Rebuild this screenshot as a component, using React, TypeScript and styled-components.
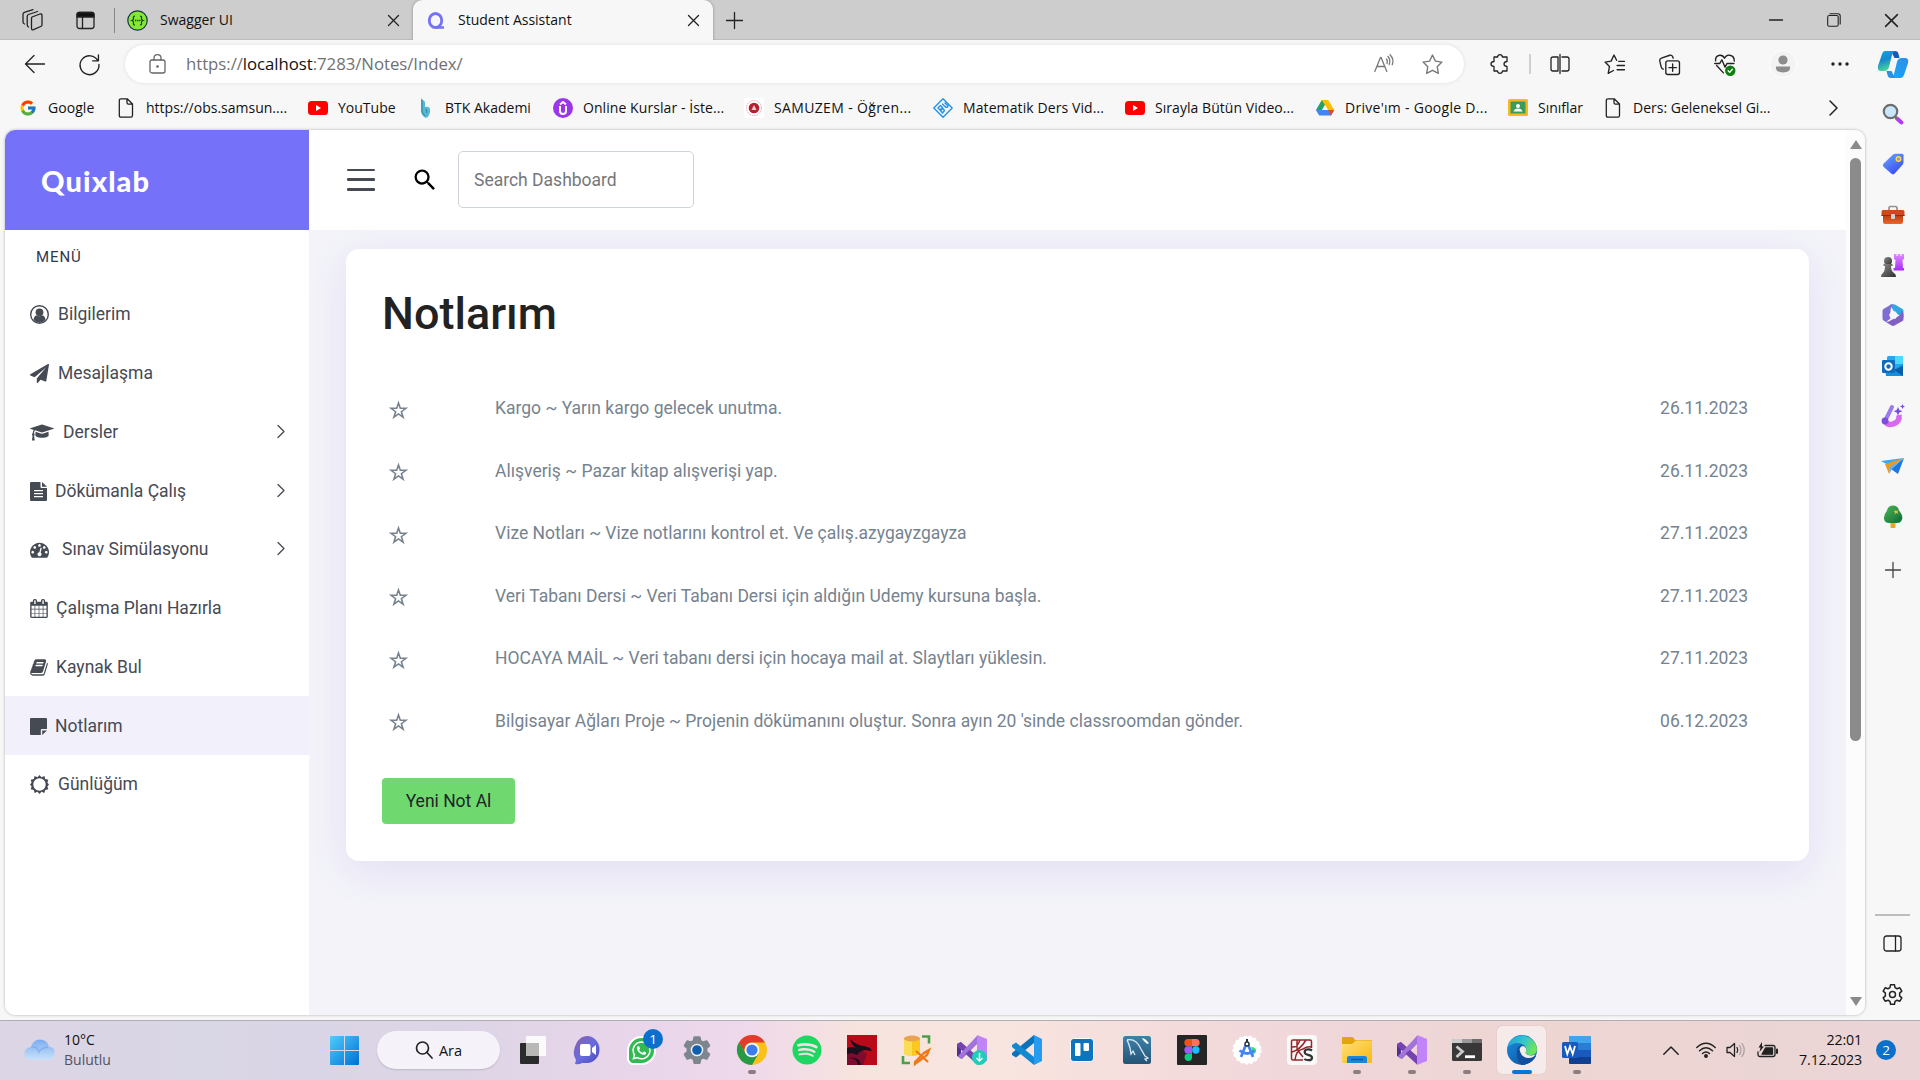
import React from 'react';
import styled, { createGlobalStyle, css } from 'styled-components';
import { FcGoogle } from 'react-icons/fc';
import { FaSpotify, FaWhatsapp } from 'react-icons/fa';
import { MdSearch } from 'react-icons/md';

const GlobalStyle = createGlobalStyle`
  *, *::before, *::after { box-sizing: border-box; }
  body { margin: 0; overflow: hidden; font-family: "Open Sans", "Noto Sans", sans-serif; }
  svg { display: block; flex: none; overflow: visible; }
`;

const roboto = css`font-family: Roboto, "Liberation Sans", sans-serif;`;

const Desktop = styled.div`
  width: 1920px; height: 1080px; display: flex; flex-direction: column;
  background: #f7f7f7; color: #111; overflow: hidden; white-space: nowrap;
`;

/* ---------- Browser chrome ---------- */
const TabStrip = styled.header`
  height: 40px; display: flex; align-items: center; flex: none;
  background: #cdcdcd; box-shadow: inset 0 -1px 0 #bdbdbd;
`;
const Slot = styled.div<{ $w: number; $pl?: number }>`
  width: ${p => p.$w}px; padding-left: ${p => p.$pl ?? 0}px; display: flex; justify-content: center; align-items: center; flex: none;
`;
const VLine = styled.span<{ $h: number; $c: string; $w?: number }>`
  width: ${p => p.$w ?? 1}px; height: ${p => p.$h}px; background: ${p => p.$c}; flex: none;
`;
const Tab = styled.div<{ $active?: boolean; $w: number }>`
  width: ${p => p.$w}px; height: 40px; padding: 0 14px 0 ${p => (p.$active ? 12 : 2)}px;
  display: flex; align-items: center; flex: none;
  border-radius: 9px 9px 0 0; font-size: 14px;
  background: ${p => (p.$active ? '#f7f7f7' : 'transparent')};
  box-shadow: ${p => (p.$active ? '0 0 3px rgba(0,0,0,.35)' : 'none')};
  clip-path: inset(0 -4px 0 -4px);
`;
const TabTitle = styled.span`flex: 1; margin-left: 12px; line-height: 20px;`;
const Spacer = styled.span`flex: 1;`;

const Toolbar = styled.div`
  height: 46px; padding: 2px 0 0 7px; display: flex; align-items: center; flex: none;
`;
const Address = styled.div`
  width: 1339px; height: 38px; margin: 0 9px 0 8px; padding: 0 7px 0 24px; display: flex; align-items: center;
  background: #fff; border-radius: 19px; box-shadow: 0 0 4px rgba(0,0,0,.1); flex: none;
`;
const Url = styled.span`
  flex: 1; margin-left: 20px; font-size: 16.8px; letter-spacing: -0.05px; color: #717171; line-height: 24px; margin-top: -1px;
  b { font-weight: 400; color: #111; }
`;
const Avatar = styled.span`
  width: 28px; height: 28px; border-radius: 50%; background: #f3f3f3; border: 1px solid #fff;
  display: flex; align-items: center; justify-content: center;
`;

const Body = styled.div`height: 934px; display: flex; flex: none;`;
const MainColumn = styled.div`width: 1865px; display: flex; flex-direction: column; flex: none;`;
const Bookmarks = styled.nav`height: 44px; padding-left: 18px; display: flex; align-items: center; flex: none;`;
const Bookmark = styled.div<{ $w: number }>`
  width: ${p => p.$w}px; display: flex; align-items: center; gap: 10px; flex: none;
  font-size: 14px; line-height: 20px;
`;
const BookmarkText = styled.span<{ $ls: number }>`letter-spacing: ${p => p.$ls}px;`;

const EdgeBar = styled.aside`
  width: 55px; display: flex; flex-direction: column; align-items: center; padding: 3px 0 0; flex: none;
`;
const EdgeItem = styled.div<{ $h?: number }>`
  height: ${p => p.$h ?? 50.3}px; display: flex; align-items: center; justify-content: center; flex: none;
`;
const EdgeRule = styled.span`width: 35px; height: 2px; background: #bdbdbd; margin-bottom: 2px; flex: none;`;

/* ---------- Web page ---------- */
const Page = styled.div`
  width: 1860px; height: 885px; margin-left: 5px; display: flex; flex: none; overflow: hidden;
  border-radius: 10px; background: #f3f3f9; box-shadow: 0 0 3px rgba(0,0,0,.3);
  ${roboto}
`;
const SideNav = styled.aside`width: 304px; background: #fff; display: flex; flex-direction: column; flex: none;`;
const Brand = styled.div`
  height: 100px; padding: 0 0 0 36px; display: flex; align-items: center; background: #7571f9; color: #fff; flex: none;
  font: 900 29px/1 Lato, sans-serif; letter-spacing: 1.1px;
`;
const MenuLabel = styled.div`
  height: 54.5px; padding-left: 31px; font-size: 15px; letter-spacing: 0.9px; line-height: 54px; color: #30384a; flex: none;
`;
const MenuItem = styled.div<{ $active?: boolean }>`
  height: 58.75px; padding: 0 24px 0 25px; display: flex; align-items: center; flex: none;
  font-size: 17.5px; color: #464a53; background: ${p => (p.$active ? '#f2f0fb' : 'transparent')};
`;
const MenuIcon = styled.span<{ $gap: number }>`margin: 2px ${p => p.$gap}px 0 0; display: flex;`;
const MenuText = styled.span`flex: 1; line-height: 26px; margin-top: 1px;`;

const Content = styled.main`width: 1537px; display: flex; flex-direction: column; flex: none; overflow: hidden;`;
const TopBar = styled.div`
  height: 100px; padding: 0 0 1px 38px; display: flex; align-items: center; background: #fff; flex: none;
`;
const Burger = styled.div`
  width: 28px; height: 22px; display: flex; flex-direction: column; justify-content: space-between;
  span { height: 2.5px; background: #464a53; border-radius: 1px; }
`;
const SearchBox = styled.div`
  width: 236px; height: 57px; padding-left: 15px; border: 1px solid #ced4da; border-radius: 5px;
  font-size: 17.5px; line-height: 56px; color: #76777b;
`;
const Card = styled.section`
  width: 1463px; height: 612px; margin: 19px 0 0 37px; padding: 33px 36px 0; border-radius: 13px; background: #fff; flex: none;
  box-shadow: 0 10px 40px -2px rgba(120, 90, 220, .14);
  display: flex; flex-direction: column; align-items: flex-start;
`;
const Title = styled.h1`margin: 0 0 31px 0; font-size: 45px; line-height: 64px; font-weight: 500; color: #222;`;
const Notes = styled.div`width: 100%; display: flex; flex-direction: column; flex: none;`;
const Note = styled.div`
  height: 62.5px; padding: 0 25px 0 7px; display: flex; align-items: center; font-size: 17.5px; color: #76838f;
`;
const NoteStar = styled.span`width: 106px; padding-top: 4px;`;
const NoteText = styled.span`flex: 1;`;
const AddButton = styled.button`
  width: 133px; height: 46px; margin-top: 26px; border: 0; border-radius: 4px; background: #6fd96f; color: #212529;
  font-size: 17.5px; ${roboto}
`;
const ScrollTrack = styled.div`
  width: 19px; padding: 10px 0 9px; display: flex; flex-direction: column; align-items: center; background: #fcfcfc; flex: none;
`;
const ScrollThumb = styled.div`width: 11px; height: 583px; margin: 9px 0 auto; border-radius: 6px; background: #8b8b8b;`;

/* ---------- Taskbar ---------- */
const Taskbar = styled.footer`
  height: 60px; padding-bottom: 1px; display: flex; align-items: center; border-top: 1px solid #b1acb5; flex: none;
  background: linear-gradient(90deg, #dcd5e5 0, #d9d6e6 200px, #dcd5e6 450px, #e8d5ea 620px, #eed8ec 740px, #f7e4de 860px, #f9e5df 1000px, #f3dbdc 1180px, #efd6d9 1350px, #edd6d2 1560px, #ead4d6 1920px);
`;
const Weather = styled.div`
  width: 317px; padding-left: 24px; display: flex; align-items: center; gap: 9px; flex: none; font-size: 14px; line-height: 20px;
`;
const Lines = styled.div`display: flex; flex-direction: column;`;
const Muted = styled.span`color: #55525e;`;
const SearchPill = styled.div`
  width: 123px; height: 38px; margin: 0 4px 0 6px; display: flex; align-items: center; justify-content: center; gap: 6px;
  background: #f5f3f9; border-radius: 19px; box-shadow: 0 1px 2px rgba(0,0,0,.14); font-size: 14.5px; flex: none;
`;
const TaskApp = styled.div<{ $current?: boolean }>`
  position: relative; width: 49px; height: 48px; margin: 0 3px; display: flex; align-items: center; justify-content: center; flex: none;
  border-radius: 5px; background: ${p => (p.$current ? '#f6ebea' : 'transparent')};
  box-shadow: ${p => (p.$current ? '0 0 1px rgba(0,0,0,.25)' : 'none')};
`;
const Running = styled.span<{ $current?: boolean }>`
  position: absolute; bottom: 0; left: 50%; transform: translateX(-50%); height: 4px; border-radius: 2px;
  width: ${p => (p.$current ? 20 : 8)}px; background: ${p => (p.$current ? '#0078d4' : '#8b7d80')};
`;
const Count = styled.span<{ $floating?: boolean }>`
  ${p => p.$floating && css`position: absolute; right: 3px; top: 3px;`}
  width: 20px; height: 20px; border-radius: 50%; display: flex; align-items: center; justify-content: center;
  background: #0a70cc; color: #fff; font-size: 13.5px; line-height: 20px; flex: none;
`;
const WhatsTile = styled.span`
  width: 29px; height: 29px; border-radius: 50% 50% 50% 22%; background: #33b951; border: 2px solid #fff; color: #fff;
  display: flex; align-items: center; justify-content: center;
`;
const Tray = styled.div`margin-left: auto; padding-right: 24px; display: flex; align-items: center;`;
const Clock = styled.div`
  width: 78px; margin-right: 14px; font-size: 14.2px; line-height: 20px; text-align: right;
  display: flex; flex-direction: column; letter-spacing: -0.15px;
`;

/* ---------- Icons ---------- */
type IconProps = { w?: number; h?: number; vb?: string; children: React.ReactNode; sw?: number; color?: string };
const Line = ({ w = 20, h, vb = '0 0 20 20', sw = 1.3, color = '#222', children }: IconProps) => (
  <svg width={w} height={h ?? w} viewBox={vb} fill="none" stroke={color} strokeWidth={sw} strokeLinecap="round" strokeLinejoin="round">{children}</svg>
);
const Solid = ({ w = 30, h, vb = '0 0 30 30', color = '#464a53', children }: IconProps) => (
  <svg width={w} height={h ?? w} viewBox={vb} fill={color}>{children}</svg>
);
const CloseX = ({ s = 11 }: { s?: number }) => <Line w={s} vb="0 0 11 11"><path d="M.5.5l10 10M10.500.5l-10 10" /></Line>;
const DocIcon = () => <Line w={20} h={20}><path d="M5 .8h6.200L16.500 6v11.500q0 1.700-1.700 1.700H4.900q-1.600 0-1.600-1.700V2.400Q3.300.8 5 .8zM11 1v3.800q0 1.400 1.400 1.400h4" /></Line>;
const YouTube = () => <Solid w={20} h={20} vb="0 0 20 20"><rect x="0" y="3" width="20" height="14" rx="3.500" fill="#f00" /><path d="M8 7v6l5-3z" fill="#fff" /></Solid>;
const GEAR = 'M8.300 1.500h3.400l.5 2.500 1.700 1 2.500-.8 1.700 2.900-1.900 1.700v2.400l1.900 1.700-1.700 2.900-2.500-.8-1.700 1-.5 2.500H8.300l-.5-2.500-1.700-1-2.500.8-1.700-2.900 1.900-1.700V8.800L1.900 7.100l1.700-2.900 2.500.8 1.700-1z';

const bookmarks: { w: number; label: string; ls: number; icon: React.ReactNode }[] = [
  { w: 98, label: 'Google', ls: 0.05, icon: <FcGoogle size={18} /> },
  { w: 192, label: 'https://obs.samsun....', ls: 0, icon: <DocIcon /> },
  { w: 107, label: 'YouTube', ls: 0, icon: <YouTube /> },
  { w: 138, label: 'BTK Akademi', ls: 0, icon: <Solid w={20} vb="0 0 20 20"><path d="M6 0l4 4v5q6-1 5 5-1 5-4 6-5-2-5-8z" fill="#58b8cf" /><path d="M7 2v12l3 4M11 11l1 4" stroke="#2489a3" fill="none" /></Solid> },
  { w: 191, label: 'Online Kurslar - İste...', ls: 0.07, icon: <Solid w={20} vb="0 0 20 20"><circle cx="10" cy="10" r="10" fill="#9b36e8" /><path d="M7 8v5q0 3 3 3t3-3V8M7 6.500l3-2.500 3 2.500" stroke="#fff" strokeWidth="2" fill="none" /></Solid> },
  { w: 189, label: 'SAMUZEM - Öğren...', ls: 0.35, icon: <Solid w={20} vb="0 0 20 20"><rect width="20" height="20" fill="#fff" /><circle cx="10" cy="10" r="7.500" fill="none" stroke="#e2a3aa" strokeDasharray="1.500 1" /><circle cx="10" cy="10" r="5.300" fill="#b71f30" /><path d="M10 7l2.500 5h-5z" fill="#f1cdd0" /></Solid> },
  { w: 192, label: 'Matematik Ders Vid...', ls: 0.1, icon: <Line w={20} color="#2492e8" sw={1.4}><path d="M10 .8L19.200 10 10 19.200.8 10zM5 10l2.500-2.500 2 2L7 12zM7.500 12.500l2.200-2 1.800 2-2 2.500zM9.500 6l3 3q2 1 2.500-1l-3-3" /></Line> },
  { w: 190, label: 'Sırayla Bütün Video...', ls: 0.05, icon: <YouTube /> },
  { w: 193, label: "Drive'ım - Google D...", ls: 0.28, icon: <Solid w={20} vb="0 0 20 20"><path d="M6.800 2h6.400L10 7.500 4.500 17 1 12z" fill="#1fa463" /><path d="M6.800 2h6.400l6 10h-6.300z" fill="#fbbc04" /><path d="M1 12h18.200L16 17.500H4.200z" fill="#4285f4" /><path d="M13 12h6.200L16 17.500z" fill="#ea4335" /><path d="M10 7l3 5H7z" fill="#f7f7f7" /></Solid> },
  { w: 95, label: 'Sınıflar', ls: 0, icon: <Solid w={20} vb="0 0 20 20"><rect y="1" width="20" height="17" rx="1.500" fill="#f6bb1b" /><rect x="2.500" y="3.500" width="15" height="12" fill="#3c9a5b" /><circle cx="10" cy="8" r="2" fill="#fff" /><path d="M5.500 13.500q1-3 4.500-3t4.500 3z" fill="#fff" /></Solid> },
  { w: 226, label: 'Ders: Geleneksel Gi...', ls: 0, icon: <DocIcon /> },
];

const FA = '0 0 1792 1792';
const menu: { label: string; gap: number; icon: React.ReactNode; more?: boolean; active?: boolean }[] = [
  { label: 'Bilgilerim', gap: 9, icon: <Solid w={19} vb="0 0 19 19"><circle cx="9.500" cy="9.500" r="8.800" fill="none" stroke="#464a53" strokeWidth="1.400" /><circle cx="9.500" cy="7.300" r="3.900" /><path d="M3.500 15q.5-4.500 3-4.500 3 1.600 6 0 2.500 0 3 4.500-6 5.500-12 0z" /></Solid> },
  { label: 'Mesajlaşma', gap: 9, icon: <Solid w={19} vb={FA}><path d="M1764 11q33 24 27 64l-256 1536q-5 29-32 45-14 8-31 8-11 0-24-5l-453-185-242 295q-18 23-49 23-13 0-22-4-19-7-30.500-23.500t-11.500-36.500v-349l864-1059-1069 925-395-162q-37-14-40-55-2-40 32-59l1664-960q15-9 32-9 20 0 36 11z" /></Solid> },
  { label: 'Dersler', gap: 9, more: true, icon: <Solid w={24} h={19} vb="0 0 2304 1792"><path d="M1774 836l18 316q4 69-82 128t-235 93.500-323 34.500-323-34.500-235-93.500-82-128l18-316 574 181q22 7 48 7t48-7zm530-324q0 23-22 31l-1120 352q-4 1-10 1t-10-1l-652-206q-43 34-71 111.500t-34 178.500q63 36 63 109 0 69-58 107l58 433q2 14-8 25-9 11-24 11h-192q-15 0-24-11-10-11-8-25l58-433q-58-38-58-107 0-73 65-111 11-207 98-330l-333-104q-22-8-22-31t22-31l1120-352q4-1 10-1t10 1l1120 352q22 8 22 31z" /></Solid> },
  { label: 'Dökümanla Çalış', gap: 8, more: true, icon: <Solid w={17} h={19} vb="0 0 17 19"><path d="M1 0h9.500v5q0 1 1 1H17v12q0 1-1 1H1q-1 0-1-1V1q0-1 1-1zM4 8v1.300h9V8zm0 3v1.300h9V11zm0 3v1.300h9V14z" fillRule="evenodd" /><path d="M12 0l5 4.700h-5z" /></Solid> },
  { label: 'Sınav Simülasyonu', gap: 13, more: true, icon: <Solid w={19} vb={FA}><path d="M384 1152q0-53-37.500-90.500t-90.500-37.500-90.500 37.500-37.500 90.500 37.500 90.500 90.500 37.500 90.500-37.500 37.500-90.500zm192-448q0-53-37.500-90.500t-90.500-37.500-90.500 37.500-37.500 90.500 37.500 90.500 90.500 37.500 90.500-37.500 37.500-90.500zm428 481l101-382q6-26-7.500-48.500t-38.500-29.500-48 6.500-30 39.500l-101 382q-60 5-107 43.500t-63 98.500q-20 77 20 146t117 89 146-20 89-117q16-60-6-117t-72-91zm660-33q0-53-37.500-90.500t-90.500-37.500-90.500 37.500-37.500 90.500 37.500 90.500 90.500 37.500 90.500-37.500 37.500-90.500zm-640-640q0-53-37.500-90.500t-90.500-37.500-90.500 37.500-37.500 90.500 37.500 90.500 90.500 37.500 90.500-37.500 37.500-90.500zm448 192q0-53-37.500-90.500t-90.500-37.500-90.500 37.500-37.500 90.500 37.500 90.500 90.500 37.500 90.500-37.500 37.500-90.500zm320 448q0 261-141 483-19 29-54 29h-1402q-35 0-54-29-141-221-141-483 0-182 71-348t191-286 286-191 348-71 348 71 286 191 191 286 71 348z" /></Solid> },
  { label: 'Çalışma Planı Hazırla', gap: 8, icon: <Solid w={18} h={19} vb="64 0 1664 1792"><path d="M192 1664h288v-288h-288v288zm352 0h320v-288h-320v288zm-352-352h288v-320h-288v320zm352 0h320v-320h-320v320zm-352-384h288v-288h-288v288zm736 736h320v-288h-320v288zm-384-736h320v-288h-320v288zm768 736h288v-288h-288v288zm-384-352h320v-320h-320v320zm-352-864v-288q0-13-9.500-22.500t-22.500-9.500h-64q-13 0-22.500 9.500t-9.500 22.500v288q0 13 9.500 22.500t22.500 9.500h64q13 0 22.500-9.500t9.500-22.500zm736 864h288v-320h-288v320zm-384-384h320v-288h-320v288zm384 0h288v-288h-288v288zm32-480v-288q0-13-9.500-22.500t-22.500-9.500h-64q-13 0-22.500 9.500t-9.500 22.500v288q0 13 9.500 22.500t22.500 9.500h64q13 0 22.500-9.500t9.500-22.500zm384-64v1280q0 52-38 90t-90 38h-1408q-52 0-90-38t-38-90v-1280q0-52 38-90t90-38h128v-96q0-66 47-113t113-47h64q66 0 113 47t47 113v96h384v-96q0-66 47-113t113-47h64q66 0 113 47t47 113v96h128q52 0 90 38t38 90z" /></Solid> },
  { label: 'Kaynak Bul', gap: 8, icon: <Solid w={18} h={19} vb="64 0 1664 1792"><path d="M1703 478q40 57 18 129l-275 906q-19 64-76.500 107.500t-122.500 43.500h-923q-77 0-148.500-53.500t-99.500-131.500q-24-67-2-127 0-4 3-27t4-37q1-8-3-21.500t-3-19.500q2-11 8-21t16.500-23.500 16.500-23.500q23-38 45-91.500t30-91.500q3-10 .5-30t-.5-28q3-11 17-28t17-23q21-36 42-92t25-90q1-9-2.500-32t.5-28q4-13 22-30.500t22-22.500q19-26 42.500-84.500t27.500-96.500q1-8-3-25.500t-2-26.500q2-8 9-18t18-23 17-21q8-12 16.500-30.500t15-35 16-36 19.500-32 26.500-23.500 36-11.500 47.500 5.500l-1 3q38-9 51-9h761q74 0 114 56t18 130l-274 906q-36 119-71.500 153.500t-128.500 34.500h-869q-27 0-38 15-11 16-1 43 24 70 144 70h923q29 0 56-15.500t35-41.500l300-987q7-22 5-57 38 15 59 43zm-1064 2q-4 13 2 22.500t20 9.500h608q13 0 25.500-9.500t16.500-22.500l21-64q4-13-2-22.500t-20-9.500h-608q-13 0-25.500 9.500t-16.500 22.500zm-83 256q-4 13 2 22.500t20 9.500h608q13 0 25.500-9.500t16.500-22.500l21-64q4-13-2-22.500t-20-9.500h-608q-13 0-25.500 9.500t-16.500 22.500z" /></Solid> },
  { label: 'Notlarım', gap: 8, active: true, icon: <Solid w={17} h={17} vb="0 0 17 17"><path d="M1 0h15q1 0 1 1v10h-5q-1.200 0-1.200 1.200V17H1q-1 0-1-1V1q0-1 1-1z" /><path d="M12.200 12.400H17L12.200 17z" /></Solid> },
  { label: 'Günlüğüm', gap: 9, icon: <Solid w={19} vb="0 0 19 19"><path fillRule="evenodd" d="M9.500 0l2 2.300L14.400 1l.8 3.100 3.100.6-.9 3L19 9.500l-1.600 2 .9 2.800-3.100.6-.8 3.100-2.900-1.200-2 2.200-2-2.200L4.600 18l-.8-3.100-3.100-.6.9-2.800L0 9.500l1.600-1.800-.9-3 3.100-.6L4.600 1l2.900 1.300zM9.500 3.300a6.200 6.200 0 1 0 0 12.400 6.200 6.200 0 0 0 0-12.400z" /></Solid> },
];

const notes = [
  ['Kargo ~ Yarın kargo gelecek unutma.', '26.11.2023'],
  ['Alışveriş ~ Pazar kitap alışverişi yap.', '26.11.2023'],
  ['Vize Notları ~ Vize notlarını kontrol et. Ve çalış.azygayzgayza', '27.11.2023'],
  ['Veri Tabanı Dersi ~ Veri Tabanı Dersi için aldığın Udemy kursuna başla.', '27.11.2023'],
  ['HOCAYA MAİL ~ Veri tabanı dersi için hocaya mail at. Slaytları yüklesin.', '27.11.2023'],
  ["Bilgisayar Ağları Proje ~ Projenin dökümanını oluştur. Sonra ayın 20 'sinde classroomdan gönder.", '06.12.2023'],
];

const Gradients = () => (
  <svg width="0" height="0" aria-hidden="true">
    <defs>
      <linearGradient id="gWin" x2="1" y2="1"><stop stopColor="#50cdfb" /><stop offset="1" stopColor="#0070d4" /></linearGradient>
      <linearGradient id="gCop" x2=".3" y2="1"><stop stopColor="#12a5e8" /><stop offset=".5" stopColor="#1688cf" /><stop offset="1" stopColor="#48d39a" /></linearGradient>
      <linearGradient id="gCop2" x1="1" x2="0" y2="1"><stop stopColor="#2a8fe8" /><stop offset="1" stopColor="#1ba6f4" /></linearGradient>
      <linearGradient id="gTag" x2=".7" y2="1"><stop stopColor="#69adff" /><stop offset="1" stopColor="#3b49f5" /></linearGradient>
      <linearGradient id="gBag" x2="0" y2="1"><stop stopColor="#a93a10" /><stop offset="1" stopColor="#f2642a" /></linearGradient>
      <linearGradient id="gPurple" x2="0" y2="1"><stop stopColor="#e08cff" /><stop offset="1" stopColor="#a32cff" /></linearGradient>
      <linearGradient id="gPawn" x2="1" y2="1"><stop stopColor="#8b8b8b" /><stop offset="1" stopColor="#2f2f2f" /></linearGradient>
      <linearGradient id="gTree" x2="1" y2="1"><stop stopColor="#4db856" /><stop offset="1" stopColor="#0b6a35" /></linearGradient>
      <linearGradient id="gCloud" x2="0" y2="1"><stop stopColor="#7cacef" /><stop offset="1" stopColor="#c9e2fa" /></linearGradient>
      <linearGradient id="gChat" x2="1" y2="1"><stop stopColor="#8a5da5" /><stop offset=".5" stopColor="#6a6be0" /><stop offset="1" stopColor="#4a4ab8" /></linearGradient>
      <linearGradient id="gFolder" x2="1" y2="1"><stop stopColor="#ffe07a" /><stop offset="1" stopColor="#f8b80f" /></linearGradient>
      <linearGradient id="gEdgeTop" x2="1" y2=".4"><stop stopColor="#1f9fe0" /><stop offset=".6" stopColor="#35c7c9" /><stop offset="1" stopColor="#6de25a" /></linearGradient>
      <linearGradient id="gEdgeLow" x2="1" y2="1"><stop stopColor="#1b8fe0" /><stop offset="1" stopColor="#0b4b9b" /></linearGradient>
      <linearGradient id="gMySql" x2="0" y2="1"><stop stopColor="#3f81ab" /><stop offset="1" stopColor="#245476" /></linearGradient>
    </defs>
  </svg>
);

const edgeApps: React.ReactNode[] = [
  <Solid w={22} vb="0 0 22 22"><path d="M15 15.500l4.500 4" stroke="#b23df2" strokeWidth="4" strokeLinecap="round" /><path d="M12.500 13l2.500 2.500" stroke="#777" strokeWidth="2.500" /><circle cx="8.500" cy="8.500" r="6.700" fill="#c8e7fa" stroke="#6e6e6e" strokeWidth="2.200" /></Solid>,
  <Solid w={22} vb="0 0 22 22"><path d="M11 1.500q1-.8 2.500-.8H20q1.500 0 1.500 1.500v7q0 1.200-1 2.500l-8 9q-1.500 1.200-3 0l-8-7q-1.500-1.500 0-3z" fill="url(#gTag)" /><circle cx="16.500" cy="6" r="2.300" fill="#8197d6" stroke="#ffd83d" strokeWidth="1.500" /></Solid>,
  <Solid w={24} h={20} vb="0 0 24 20"><path d="M8 6V3q0-1.500 1.500-1.500h5Q16 1.500 16 3v3" fill="none" stroke="#929292" strokeWidth="1.700" /><rect x="2" y="9" width="20" height="10" rx="2" fill="url(#gBag)" /><path d="M2 5h20q1.500 0 1.500 2v4H.5V7Q.5 5 2 5z" fill="#cf4918" /><path d="M.5 10.500h23" stroke="#89310f" /><rect x="10" y="9" width="4" height="5" rx="1" fill="#cfd1d2" /></Solid>,
  <Solid w={23} vb="0 0 23 23"><path d="M13 0h2.500v2h1.200V0h2.600v2h1.200V0H23v5l-1.500 1 .5 8h1v2.500H12.500V14h1.500l.5-8L13 5z" fill="url(#gPurple)" /><circle cx="7" cy="7" r="4" fill="url(#gPawn)" /><path d="M2.500 10h9v2H10q0 5 3 7 2 1 2 4H0q0-3 2-4 2-2 2-7H2.500z" fill="url(#gPawn)" /></Solid>,
  <Solid w={22} vb="0 0 22 22"><path d="M8 .5h5l7.500 4.500q1 .8 1 2v6.500L14 9.500 11 6z" fill="#31a8e4" /><path d="M1.500 5L9 .5q1.500-.7 3 0Q8.500 3 8.500 7v7.500L4 18l-2.500-1.500Q.5 16 .5 14V7q0-1.300 1-2z" fill="#806dd4" /><path d="M21.500 11v4q0 1.300-1 2l-8 4.500q-1.500.8-3 0L3 17.500q3 .8 5.500-1l9-5q2-2 2-4.500 2 1 2 4z" fill="#8060c4" /><path d="M9.200 7.500h4.400l2.400 3.500-2.400 3.700H9.200L7 11z" fill="#f7f7f7" /></Solid>,
  <Solid w={22} vb="0 0 22 22"><rect x="5" y="1" width="16" height="20" rx="1.500" fill="#28a8ea" /><path d="M13 1h8v8h-8z" fill="#50d9ff" /><path d="M3 11l10 3 8-5v12H4z" fill="#1490df" /><path d="M21 11v10l-9-6z" fill="#0a5ea8" /><rect x="0" y="5" width="13" height="13" rx="1.200" fill="#0f6cbd" /><circle cx="6.500" cy="11.500" r="3.200" fill="none" stroke="#fff" strokeWidth="2" /></Solid>,
  <Solid w={24} vb="0 0 24 24"><path d="M4 16q2 6 8 4 7-2 6-9" fill="none" stroke="#d768f0" strokeWidth="5.500" /><path d="M11 3L5 15" stroke="#9b7bf0" strokeWidth="4" strokeLinecap="round" /><circle cx="4" cy="17" r="3.400" fill="#7b4fd9" /><path d="M17 3l1.300 3 3.200 1.200-3.200 1.300L17 11.500l-1.300-3-3-1.300 3-1.200zM21.500 0l.8 1.700L24 2.500l-1.700.8-.8 1.700-.8-1.700-1.700-.8 1.700-.8z" fill="#7a4be8" /></Solid>,
  <Solid w={24} h={18} vb="0 0 24 18"><path d="M0 4L23 1 9 9z" fill="#38a9f2" /><path d="M23 1L17 17l-7-5z" fill="#1f75e0" /><path d="M4 7L23 1 9 11l-1 6z" fill="#e89a22" /><path d="M8 17l3-5 12-11L9 10z" fill="#5bb5f4" /></Solid>,
  <Solid w={20} h={24} vb="0 0 20 24"><path d="M7.500 14h5v8q0 1-1 1h-3q-1 0-1-1z" fill="#f2a12c" /><path d="M10 .5q5 0 6 5 5 6 2.500 10-1 2.500-5 2.500h-7q-4 0-5-2.500-2-4 2.500-10 1-5 6-5z" fill="url(#gTree)" /><path d="M11.500 4l2 2 2-1-1 2 1 2-2-1-2 1.500.5-2-1.500-1.500h2z" fill="#ffb323" /></Solid>,
];

const VS = ({ children }: { children?: React.ReactNode }) => (
  <Solid><path d="M0 9l4-2v16l-4-2z" fill="#52308c" /><path d="M2 23L20 1v8L5 24z" fill="#9b69d3" /><path d="M0 9l4-2 16 14v8.500L0 11z" fill="#7443b0" /><path d="M4 23L20 8V1L1 21z" fill="#a273dc" /><path d="M20 0l10 4v22l-10 4z" fill="#c184f8" />{children}</Solid>
);

const taskApps: { icon: React.ReactNode; running?: boolean; current?: boolean; count?: string }[] = [
  { icon: <Solid w={26} h={30} vb="0 0 26 30"><rect x="1" y="8" width="19" height="21" rx="1" fill="#2b2b2b" /><rect x="7" y="1" width="20" height="20" rx="1" fill="#fafafa" /><path d="M7 8h13v13H7z" fill="#b9b8b7" /></Solid> },
  { icon: <Solid w={26} h={30} vb="0 0 26 30"><path d="M13 1a12.500 13.500 0 0 1 0 27H8q-3 2-7 1l1-4Q-3 18 3 7q4-6 10-6z" fill="url(#gChat)" /><rect x="6" y="9" width="10.500" height="12" rx="2" fill="#fff" /><path d="M18 13l4-3v10l-4-3z" fill="#fff" /></Solid> },
  { icon: <WhatsTile><FaWhatsapp size={21} /></WhatsTile>, count: '1' },
  { icon: <Solid vb="0 0 20 20"><path d={GEAR} fill="#7d868d" stroke="#7d868d" strokeWidth="1.500" strokeLinejoin="round" /><circle cx="10" cy="10" r="3.700" fill="#0f5fb0" stroke="#eee" strokeWidth="1" /></Solid> },
  { running: true, icon: <Solid><circle cx="15" cy="15" r="15" fill="#fbc116" /><path d="M2 7.500A15 15 0 0 0 15 30l6.500-11.200L15 22 8.500 18.800z" fill="#269a45" /><path d="M2 7.500A15 15 0 0 1 28 7.500H15a7.500 7.500 0 0 0-6.500 11.300z" fill="#e33b2e" /><path d="M2 7.500A15 15 0 0 0 0 15L8.500 18.800z" fill="#269a45" /><circle cx="15" cy="15" r="7.300" fill="#fff" /><circle cx="15" cy="15" r="5.600" fill="#3b7ded" /></Solid> },
  { icon: <FaSpotify size={30} color="#1ed760" /> },
  { icon: <Solid><rect width="30" height="30" fill="#b80a19" /><path d="M0 15h14l6 4-4 11H0z" fill="#7d0c2e" /><path d="M0 13q5-2 9 0Q4 9 3 4q7 7 14 7l6 2 2 3-7-1q-6 1-8 5l-5-2-5 1zM2 23q8 0 9 7h3q-2-9-12-7z" fill="#190f1d" /></Solid> },
  { icon: <Solid><path d="M2 3v16q8 4 16 0V3z" fill="#fbc91e" /><path d="M2 3v16q4 2 8 2V3z" fill="#fbdc55" /><ellipse cx="10" cy="3.500" rx="8" ry="3" fill="#eaa253" /><path d="M20 1.500h7v7M1 21v7h7" fill="none" stroke="#4b9f48" strokeWidth="2.600" /><path d="M13 27l9-9 5-3-2 5-12 9zM14 16l12 11" fill="none" stroke="#f07817" strokeWidth="2.300" /></Solid> },
  { icon: <VS><circle cx="22.500" cy="22.500" r="7.500" fill="#1fcdb9" /><path d="M22.500 18v8m-3-3l3 3 3-3" fill="none" stroke="#fff" strokeWidth="1.500" /></VS> },
  { icon: <Solid><path d="M22 0l8 4v22l-8 4z" fill="#269cf0" /><path d="M22 0v8L4 22.500 0 20v-2z" fill="#0b73ba" /><path d="M22 30v-8L4 7.500 0 10v2z" fill="#1389d2" /></Solid> },
  { icon: <Solid w={24} vb="0 0 24 24"><rect x=".5" y=".5" width="23" height="23" rx="3" fill="#0d74bd" stroke="#fff" /><rect x="5" y="5" width="5.500" height="13" rx="1" fill="#fff" /><rect x="13.500" y="5" width="5.500" height="8" rx="1" fill="#fff" /></Solid> },
  { icon: <Solid><rect x="1" y="1" width="28" height="28" rx="2.500" fill="url(#gMySql)" /><path d="M5 5q9-2 14 9l4 7 3 2-3 1 2 2M5 5q2 4 3 8l1 6 2-3 2 4" fill="none" stroke="#dfeaf2" strokeWidth="1.300" /><path d="M20 3l3 1 4 4-2 1-4-4z" fill="#fff" /></Solid> },
  { icon: <Solid><rect width="30" height="30" rx="1" fill="#252525" /><path d="M15 4v7.300h-4a3.650 3.650 0 0 1 0-7.300z" fill="#f24e1e" /><path d="M15 4h4a3.650 3.650 0 0 1 0 7.300h-4z" fill="#ff7262" /><path d="M15 11.300v7.300h-4a3.650 3.650 0 0 1 0-7.300z" fill="#a259ff" /><circle cx="18.800" cy="15" r="3.650" fill="#1abcfe" /><path d="M15 18.600v3.700a3.700 3.700 0 1 1-3.700-3.700z" fill="#0acf83" /></Solid> },
  { icon: <Solid><circle cx="15" cy="15" r="13.500" fill="#fff" stroke="#fff" strokeDasharray="3 2" strokeWidth="2" /><path d="M19 12q6 0 5 5l-3 3z" fill="#3ddc84" /><path d="M15 7L9 22M15 7l6 15M7.500 15.500q7.500 6 15 0" fill="none" stroke="#4285f4" strokeWidth="2.700" /><circle cx="15" cy="9" r="2" fill="#fff" stroke="#263238" strokeWidth="1.400" /><path d="M15 4v3" stroke="#263238" strokeWidth="2" /></Solid> },
  { icon: <Solid><rect width="30" height="30" rx="4" fill="#faf9f9" /><path d="M16 25H6q-1.500 0-1.500-1.500V6.500Q4.500 5 6 5h17q1.500 0 1.500 1.500V13M5 12q5 1 8-7M5 17q8-2 14-12M8 25q1-10 8-11 5-3 8-2M10 5v8l2 4 4 5" fill="none" stroke="#9b2429" strokeWidth="1.500" /><path d="M25 15.500q-2-1.500-5-1-2.500.5-2.300 2.800.1 2 3.300 2.500 4 .6 4 3-.2 2.400-3.200 2.400-3 0-4.500-1.200" fill="none" stroke="#333" strokeWidth="2.200" /></Solid> },
  { running: true, icon: <Solid><path d="M0 3q0-1 1-1h9q1.500 0 3 3h16q1 0 1 1v5H0z" fill="#e3a50c" /><path d="M0 9h10l4-3.500h15q1 0 1 1V27q0 1-1 1H1q-1 0-1-1z" fill="url(#gFolder)" /><path d="M5 28v-5q0-2 2-2h16q2 0 2 2v5z" fill="#1787dd" /><path d="M9 24.500h12" stroke="#0c5ca6" strokeWidth="1.500" /></Solid> },
  { running: true, icon: <VS /> },
  { running: true, icon: <Solid><rect y="4" width="30" height="22" rx="1.500" fill="#383838" /><path d="M0 8V5q0-1 1-1h9v4z" fill="#cdcdcd" /><path d="M10 4h10v4H10z" fill="#9a9a9a" /><path d="M20 4h9q1 0 1 1v3H20z" fill="#6d6d6d" /><path d="M4.500 11.500l6 5-6 5.500" fill="none" stroke="#ccc" strokeWidth="2.800" /><path d="M13 21.700h10" stroke="#fff" strokeWidth="2.800" /></Solid> },
  { running: true, current: true, icon: <Solid><circle cx="15" cy="15" r="15" fill="url(#gEdgeLow)" /><path d="M.5 12A15 15 0 0 1 30 14q0 6-6 6-5 0-6-2 3-5-1-8Q9 5 .5 12z" fill="url(#gEdgeTop)" /><path d="M10 16q0-4 4-6 6 1 5 6-2 2 0 4 3 3 9 0l1 1q-4 8-14 9-6-4-5-14z" fill="#124f9e" /><path d="M12.500 14q1.500-4 5-2.500 3 2.500.8 6.500 1.700 2.500 6 2.500 3.500-.3 4.500-1.500-2 4-7 4-8 0-9.300-9z" fill="#f6ebea" /></Solid> },
  { running: true, icon: <Solid><rect x="7" y="1" width="22" height="28" rx="1.500" fill="#2b7cd3" /><path d="M7 2.500Q7 1 8.500 1h19Q29 1 29 2.500V8H7z" fill="#41a5ee" /><path d="M7 15h22v7H7z" fill="#185abd" /><path d="M7 22h22v5.500q0 1.500-1.500 1.500h-19Q7 29 7 27.500z" fill="#103f91" /><rect y="7" width="16" height="16" rx="1.500" fill="#185abd" /><path d="M3 11l2.300 8L8 11.500l2.700 7.500L13 11" fill="none" stroke="#fff" strokeWidth="1.800" /></Solid> },
];

const BrowserChrome = () => (
  <>
    <TabStrip>
      <Slot $w={66}><Line w={22} vb="0 0 22 22"><path d="M10 8l8-3q2-.5 2 1.500v9.200q0 1.300-1.300 1.800l-7.200 3.200Q9.500 21.300 9.500 19.500V10q0-1.500.5-2zM6.500 18Q5.200 17.500 5.200 15.700V7.500Q5.200 6 6.500 5.500L15.500 2.500M2.500 15Q1 14.500 1 12.800V5.500Q1 4 2.300 3.400L11 .7" /></Line></Slot>
      <Slot $w={38}><Line w={19} vb="0 0 19 19"><rect x="1" y="1.500" width="17" height="16" rx="2.500" /><path d="M1 3.500q0-2 2-2h13q2 0 2 2V6H1z" fill="#111" /><path d="M6.500 6v11.500" /></Line></Slot>
      <Slot $w={21}><VLine $h={25} $c="#858585" /></Slot>
      <Tab $w={288}>
        <Solid w={21} vb="0 0 21 21"><circle cx="10.500" cy="10.500" r="9.700" fill="#85ea2d" stroke="#173647" strokeWidth="1.200" /><path d="M8 6Q6 6 6.500 8.500 6.700 10 5 10.500q1.700.5 1.500 2Q6 15 8 15M13 6q2 0 1.500 2.500-.2 1.500 1.500 2-1.700.5-1.500 2Q15 15 13 15" fill="none" stroke="#173647" strokeWidth="1.200" /><path d="M8 10.500h5.500" stroke="#173647" strokeWidth="1.500" strokeDasharray="1.300 .8" /></Solid>
        <TabTitle>Swagger UI</TabTitle><CloseX />
      </Tab>
      <Tab $w={300} $active>
        <Solid w={21} vb="0 0 21 21"><ellipse cx="10.500" cy="10.500" rx="6.200" ry="7" fill="none" stroke="#7571f9" strokeWidth="2.800" /><path d="M10 17.500h9" stroke="#7571f9" strokeWidth="2.500" /></Solid>
        <TabTitle>Student Assistant</TabTitle><CloseX />
      </Tab>
      <Slot $w={43}><Line w={17} vb="0 0 17 17"><path d="M8.500.5v16M.5 8.500h16" /></Line></Slot>
      <Spacer />
      <Slot $w={58}><Line w={14} vb="0 0 14 14"><path d="M.5 7h13" /></Line></Slot>
      <Slot $w={57}><Line w={14} vb="0 0 14 14" sw={1.1}><rect x=".7" y="2.500" width="10.500" height="10.800" rx="1.500" /><path d="M3 .8h8q2.200 0 2.200 2.200v8" /></Line></Slot>
      <Slot $w={58}><CloseX s={13} /></Slot>
    </TabStrip>
    <Toolbar>
      <Slot $w={55}><Line><path d="M19.500 10H.5M9 1.500L.5 10 9 18.500" /></Line></Slot>
      <Slot $w={55}><Line w={21}><path d="M18 6.500A9 9 0 1 0 19 10M18.500 1v5.500H13" /></Line></Slot>
      <Address>
        <Line w={17} h={20} vb="0 0 17 20" color="#666"><rect x="1" y="6" width="15" height="13" rx="2" /><path d="M5 6V4q0-3.300 3.500-3.300T12 4v2" /><circle cx="8.500" cy="12.500" r=".7" fill="#666" /></Line>
        <Url>https://<b>localhost</b>:7283/Notes/Index/</Url>
        <Slot $w={49}><Line w={20} color="#777"><path d="M.8 17.500L6.500 3.500h.6l5.700 14M3 12.500h7.500M12.500 5q1.500 2 .5 4.500M14 2.500q3 3.500 1.200 8M16 .8q4.500 4.500 2.200 10" /></Line></Slot>
        <Slot $w={49}><Line w={21} color="#777"><path d="M10 1l2.800 5.800 6.200.9-4.500 4.500 1.100 6.300L10 15.500l-5.600 3 1.100-6.300L1 7.700l6.200-.9z" /></Line></Slot>
      </Address>
      <Slot $w={54}><Line w={20}><path d="M4 3h3.500Q8 .7 10 .7T12.500 3H17v4.500q-3 .3-3 2.500t3 2.500V17h-4.500q-.3 2.300-2.500 2.300T7.500 17H4v-4.500Q1 12.300 1 10t3-2.500z" /></Line></Slot>
      <Slot $w={5}><VLine $h={20} $w={2} $c="#cfcfcf" /></Slot>
      <Slot $w={55}><Line w={20}><path d="M8 3H3Q1 3 1 5v10q0 2 2 2h5zM12 3h5q2 0 2 2v10q0 2-2 2h-5M10 .5v19" /></Line></Slot>
      <Slot $w={55}><Line w={21}><path d="M12 6L9.500 1 6.800 6.800 1 7.700l4.200 4.300L4 18.500 9 15.700M14 7h5.500M12.500 11h7M12.500 15h7" /></Line></Slot>
      <Slot $w={55}><Line w={21}><rect x="6.500" y="6.500" width="13" height="13" rx="2" /><path d="M13 9.500v7M9.500 13h7M4 14.500Q2.500 14 2 12L.7 6.500Q.5 4.500 2.300 4l8-2.800Q12 .7 13 2.500l.5 1.500" /></Line></Slot>
      <Slot $w={55}><Line w={21}><path d="M.7 9h4.800l2-3.500 3 7 2-3.500h6.500M1.500 6.500Q1 2 5.500 1.200 8.500 1 10 4q2-3.500 5-2.800 4.500.8 4.300 5.600M2.500 11l6.500 7" /><circle cx="15.500" cy="16" r="4.300" fill="#107c10" stroke="#107c10" /><path d="M13.500 16l1.500 1.500 2.500-3" stroke="#fff" /></Line></Slot>
      <Slot $w={61}><Avatar><Solid w={16} h={19} vb="0 0 16 19"><circle cx="8" cy="5" r="4.600" fill="#8d8d8d" /><path d="M1 11.500h14q1 5.500-7 6-8-.5-7-6z" fill="#8d8d8d" /></Solid></Avatar></Slot>
      <Slot $w={53}><Solid w={18} h={4} vb="0 0 18 4"><circle cx="2" cy="2" r="1.700" fill="#222" /><circle cx="9" cy="2" r="1.700" fill="#222" /><circle cx="16" cy="2" r="1.700" fill="#222" /></Solid></Slot>
      <Slot $w={53}><Solid w={30} h={27} vb="0 0 30 27"><path d="M13 0h4q3 0 3.500 3l1 4h-5z" fill="#0b5db5" /><path d="M7 0h10q-2 1-3 4l-3 12q-1 4-5 4H3q-4 0-3-5L4 3q1-3 3-3z" fill="url(#gCop)" /><path d="M23 27H13q2-1 3-4l3-12q1-4 5-4H27q4 0 3 5l-4 12q-1 3-3 3z" fill="url(#gCop2)" /><path d="M17 27h-4q-3 0-3.500-3l-1-4h5z" fill="#2c8fe0" /></Solid></Slot>
    </Toolbar>
  </>
);

const WebPage = () => (
  <Page>
    <SideNav>
      <Brand>Quixlab</Brand>
      <MenuLabel>MENÜ</MenuLabel>
      {menu.map(m => (
        <MenuItem key={m.label} $active={m.active}>
          <MenuIcon $gap={m.gap}>{m.icon}</MenuIcon>
          <MenuText>{m.label}</MenuText>
          {m.more && <Line w={8} h={13} vb="0 0 8 13" color="#464a53"><path d="M1 .5l6 6-6 6" /></Line>}
        </MenuItem>
      ))}
    </SideNav>
    <Content>
      <TopBar>
        <Burger><span /><span /><span /></Burger>
        <Slot $w={83} $pl={17}><MdSearch size={28} color="#000" /></Slot>
        <SearchBox>Search Dashboard</SearchBox>
      </TopBar>
      <Card>
        <Title>Notlarım</Title>
        <Notes>
          {notes.map(([text, date]) => (
            <Note key={text}>
              <NoteStar><Line w={19} h={19} vb="0 0 19 19" color="#76838f" sw={1.6}><path d="M9.500 2l1.800 5.300h5.600l-4.500 3.400 1.700 5.500-4.600-3.300-4.600 3.300 1.700-5.500L2.100 7.300h5.600z" strokeLinejoin="miter" /></Line></NoteStar>
              <NoteText>{text}</NoteText>
              <span>{date}</span>
            </Note>
          ))}
        </Notes>
        <AddButton>Yeni Not Al</AddButton>
      </Card>
    </Content>
    <ScrollTrack>
      <Solid w={12} h={9} vb="0 0 12 9"><path d="M6 0l6 9H0z" fill="#8b8b8b" /></Solid>
      <ScrollThumb />
      <Solid w={12} h={9} vb="0 0 12 9"><path d="M6 9l6-9H0z" fill="#8b8b8b" /></Solid>
    </ScrollTrack>
  </Page>
);

const TaskbarRow = () => (
  <Taskbar>
    <Weather>
      <Solid w={31} h={22} vb="0 0 31 22"><path d="M7 21q-7-1-6.500-7Q1 9 7 8q2-7.500 9-7.500 7 0 9 7 6 .5 5.700 7-.5 6-6.700 6.500z" fill="url(#gCloud)" /><path d="M7 8q6-1 8 5 2-4 9-5" fill="none" stroke="#6d9ae5" strokeWidth="1.500" opacity=".5" /></Solid>
      <Lines><span>10°C</span><Muted>Bulutlu</Muted></Lines>
    </Weather>
    <Slot $w={54}><Solid w={29} vb="0 0 29 29"><path d="M1 0h13v14H0V1q0-1 1-1zM15 0h13q1 0 1 1v13H15zM0 15h14v14H1q-1 0-1-1zM15 15h14v13q0 1-1 1H15z" fill="url(#gWin)" /></Solid></Slot>
    <SearchPill><Line w={18} vb="0 0 18 18" sw={1.7}><circle cx="7.500" cy="7" r="6" /><path d="M12 11.500l5 5.500" /></Line>Ara</SearchPill>
    {taskApps.map((a, i) => (
      <TaskApp key={i} $current={a.current}>
        {a.icon}
        {a.count && <Count $floating>{a.count}</Count>}
        {a.running && <Running $current={a.current} />}
      </TaskApp>
    ))}
    <Tray>
      <Slot $w={38}><Line w={16} h={9} vb="0 0 16 9" sw={1.5}><path d="M.8 8.200L8 1l7.200 7.200" /></Line></Slot>
      <Slot $w={32}><Line w={20} h={16} vb="0 0 20 16" sw={1.5}><path d="M.8 5.500q9.200-8.500 18.400 0M3.500 8.700q6.500-6 13 0M6.500 11.500q3.500-3 7 0" /><circle cx="10" cy="14" r="1.200" fill="#222" /></Line></Slot>
      <Slot $w={28}><Line w={20} h={16} vb="0 0 20 16"><path d="M1 5.500h3L8.500 1.500v13L4 10.500H1zM11 5.500q1.500 2.500 0 5" /><path d="M13.500 3.500q3 4.500 0 9M16 1.500q4.500 6.500 0 13" stroke="#aaa0a3" /></Line></Slot>
      <Slot $w={34}><Line w={21} h={16} vb="0 0 21 16"><path d="M8 3.500h8q2 0 2 2v7q0 2-2 2H3q-2 0-2-2V10" /><path d="M8.500 6H15.500v6.200H5z" fill="#222" /><path d="M20 7.500v3.500" strokeWidth="2" /><path d="M5 0L1.500 5.500h2l-1 4.500L7 4.500H5z" fill="#222" stroke="none" /></Line></Slot>
      <Clock><span>22:01</span><span>7.12.2023</span></Clock>
      <Count>2</Count>
    </Tray>
  </Taskbar>
);

export default function App() {
  return (
    <Desktop>
      <GlobalStyle />
      <BrowserChrome />
      <Body>
        <MainColumn>
          <Bookmarks>
            {bookmarks.map(b => (
              <Bookmark key={b.label} $w={b.w}><Slot $w={20}>{b.icon}</Slot><BookmarkText $ls={b.ls}>{b.label}</BookmarkText></Bookmark>
            ))}
            <Line w={9} h={16} vb="0 0 9 16" sw={1.5}><path d="M1 1l7 7-7 7" /></Line>
          </Bookmarks>
          <WebPage />
        </MainColumn>
        <EdgeBar>
          {edgeApps.map((icon, i) => <EdgeItem key={i}>{icon}</EdgeItem>)}
          <EdgeItem $h={57}><Line w={16} vb="0 0 16 16" color="#444"><path d="M8 .5v15M.5 8h15" /></Line></EdgeItem>
          <Spacer />
          <EdgeRule />
          <EdgeItem $h={50}><Line w={19} h={17} vb="0 0 19 17"><rect x="1" y="1" width="17" height="15" rx="2.500" /><path d="M12.500 1v15" /></Line></EdgeItem>
          <EdgeItem $h={52}><Line w={23}><path d={GEAR} /><circle cx="10" cy="10" r="2.600" /></Line></EdgeItem>
        </EdgeBar>
      </Body>
      <TaskbarRow />
      <Gradients />
    </Desktop>
  );
}
